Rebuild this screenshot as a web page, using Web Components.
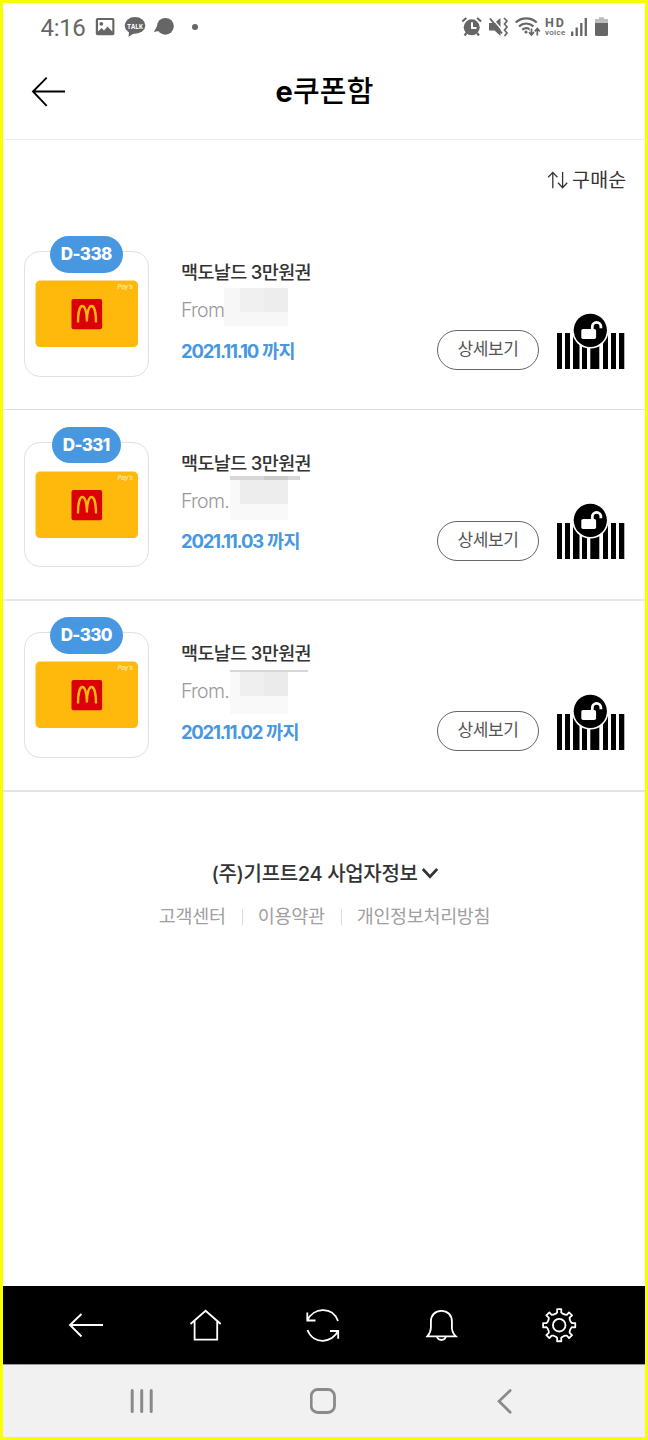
<!DOCTYPE html>
<html lang="ko">
<head>
<meta charset="utf-8">
<title>e쿠폰함</title>
<style>
html,body{margin:0;padding:0}
body{width:648px;height:1440px;background:#fff;font-family:Inter,"Noto Sans CJK KR",sans-serif;overflow:hidden}
</style>
</head>
<body>
<coupon-app></coupon-app>
<script>
// Eight-tooth gear outline around the given centre.
function gear(cx, cy) {
  const pts = [];
  for (let i = 0; i < 8; i++) {
    for (const [d, r] of [[-16, 12], [-9, 12.9], [-7.5, 16.2], [7.5, 16.2], [9, 12.9], [16, 12]]) {
      const a = (i * 45 + d) * Math.PI / 180;
      pts.push((cx + r * Math.sin(a)).toFixed(2) + ',' + (cy - r * Math.cos(a)).toFixed(2));
    }
  }
  return pts.join(' ');
}
// Each icon: viewBox and markup. One unit is one CSS pixel.
const ICONS = {
  picture: ['95 3 20 49', '<rect x="95.8" y="18" width="18.6" height="17.2" rx="1.8" fill="#666"/><path d="M98 20h14.300v11.500l-4.800-5-3.500 4-2.500-2.500L98 31.500z" fill="#fff"/><circle cx="101.300" cy="23.800" r="1.900" fill="#666"/>'],
  talk: ['124 3 22 49', '<ellipse cx="135" cy="25.400" rx="10.300" ry="8.300" fill="#666"/><path d="M129 31l-.4 5.700 6-3.700z" fill="#666"/><text x="135.100" y="28.500" text-anchor="middle" font-size="7.400" font-weight="700" fill="#fff" font-family="Open Sans,sans-serif" textLength="15.500" lengthAdjust="spacingAndGlyphs">TALK</text>'],
  ball: ['153 3 22 49', '<circle cx="165.400" cy="26.300" r="8.400" fill="#666"/><path d="M158.500 24.500c-2 1.500-2.800 4.500-4.700 7.700 1.800-1 3.500-1.200 5.500-1z" fill="#666"/>'],
  dot: ['191 3 8 49', '<circle cx="195" cy="27" r="3" fill="#666"/>'],
  alarm: ['461 3 21 49', '<circle cx="471.700" cy="27.300" r="8" fill="#666"/><path d="M462.300 21.500l4-3.500M481.100 21.500l-4-3.500M466.500 33l-2 2.500M477 33l2 2.500" stroke="#666" stroke-width="2.200" fill="none"/><path d="M472 22.300v5.700h4.500" stroke="#fff" stroke-width="2" fill="none"/>'],
  mute: ['488 3 21 49', '<path d="M489 23h5.500l6-5v18l-6-5.500H489z" fill="#666"/><path d="M491.500 17.500l11 13" stroke="#fff" stroke-width="1.400"/><path d="M490 18.500l12 15" stroke="#666" stroke-width="2"/><path d="M504 18l3 3-2.500 3 2.500 3-2.500 3 2.500 3-2.500 3" fill="none" stroke="#666" stroke-width="1.700"/>'],
  wifi: ['515 3 27 49', '<g fill="none" stroke="#666" stroke-width="2.200"><path d="M515.700 22.500c6-5.500 15-5.500 21 0"/><path d="M519 26.300c4.200-3.700 10.200-3.700 14.500 0"/><path d="M522.300 29.800c2.400-2 5.600-2 8 0"/></g><circle cx="526" cy="32" r="1.600" fill="#666"/><path d="M531.500 27.500v7.500m-2.600-3l2.600 3 2.600-3M537.300 35v-7m-2.600 3l2.600-3 2.600 3" fill="none" stroke="#fff" stroke-width="3.500"/><path d="M531.500 28.500v6.300m-2.500-2.700l2.500 2.900 2.500-2.900M537.300 35.500v-7m-2.500 2.900l2.500-2.900 2.500 2.900" fill="none" stroke="#666" stroke-width="1.700"/>'],
  signal: ['570 3 18 49', '<path d="M572.200 31.500V36M576.700 27.500V36M581.300 23V36M585.800 18V36" stroke="#666" stroke-width="2.300"/>'],
  battery: ['594 3 15 49', '<path d="M599 17.200h5V19h4v4h-13v-4h4z" fill="#bdbdbd"/><path d="M595 23h13v11.500q0 1.500-1.500 1.500h-10q-1.500 0-1.500-1.500z" fill="#666"/>'],
  back: ['30 75 38 34', '<path d="M46.700 77.700L33 91.500l13.700 14.300M33 91.500h32" fill="none" stroke="#000" stroke-width="1.900"/>'],
  sort: ['547 168 22 24', '<path d="M552.800 188.300V172.500M548.200 177.300l4.600-4.900 4.600 4.900M562.600 172v15.600M558 182.800l4.600 4.900 4.600-4.900" fill="none" stroke="#333" stroke-width="1.300"/>'],
  barcode: ['556 312 70 58', '<path d="M557 333h5v36h-5zM565 333h5v36h-5zM573 333h6.500v36H573zM582 333h5v36h-5zM590.300 333h9v36h-9zM603 333h5v36h-5zM611 333h5v36h-5zM619 333h5.300v36H619z" fill="#000"/><circle cx="590.300" cy="330.300" r="18.300" fill="#fff"/><circle cx="590.300" cy="330.300" r="16.600" fill="#000"/><rect x="581.300" y="329" width="14.800" height="10" rx="1.800" fill="#fff"/><path d="M592.300 331v-4.300a4.300 4.300 0 0 1 8.600 0v1.500" fill="none" stroke="#fff" stroke-width="2.800"/>'],
  chevron: ['421 866 19 16', '<path d="M422.800 869l7.200 7.700 7.200-7.700" fill="none" stroke="#333" stroke-width="2.700"/>'],
  navback: ['68 1306 36 38', '<path d="M81.500 1314l-11.500 11 11.500 11.500M70 1325h33" fill="none" stroke="#fff" stroke-width="1.900"/>'],
  home: ['186 1306 35 38', '<path d="M190.500 1324l15.100-13.300 15.100 13.300M194.600 1321v18.600h22.600V1321" fill="none" stroke="#fff" stroke-width="1.800"/>'],
  refresh: ['304 1306 38 38', '<g fill="none" stroke="#fff" stroke-width="1.800"><path d="M307.300 1312.500v8h8.200M307.500 1320.300C313 1308 332 1305.500 338 1321M307.500 1330C313 1345 333 1343.500 338 1330.700M330 1331h8.200v7.800"/></g>'],
  bell: ['424 1306 35 38', '<g fill="none" stroke="#fff" stroke-width="1.800"><path d="M427.300 1336.400c3-3.500 3.600-5.400 3.600-9V1321.500c0-6.500 4.300-10.600 10.500-10.600s10.500 4.100 10.500 10.600v5.900c0 3.600.6 5.500 4 9z"/><path d="M437 1337c.8 2 2.300 3 4.400 3s3.600-1 4.400-3"/></g>'],
  gear: ['541 1306 37 38', '<g fill="none" stroke="#fff" stroke-width="1.800" stroke-linejoin="round"><polygon points="' + gear(559.2, 1325.2) + '"/><circle cx="559.200" cy="1325.200" r="6.300"/></g>'],
  recents: ['129 1386 25 30', '<path d="M132.200 1390.500v21M141.700 1390.500v21M151.200 1390.500v21" stroke="#8a8a8a" stroke-width="3" stroke-linecap="round"/>'],
  syshome: ['310 1386 30 30', '<rect x="311.200" y="1389.500" width="23.300" height="23" rx="6.500" fill="none" stroke="#8a8a8a" stroke-width="2.800"/>'],
  sysback: ['495 1386 20 30', '<path d="M510.200 1390.500L499 1401.200l11.200 11" fill="none" stroke="#8a8a8a" stroke-width="2.700" stroke-linecap="round"/>'],
  card: ['35 280 104 68', '<rect x="35.500" y="280.600" width="102.500" height="66.500" rx="4.500" fill="#ffb90d"/><rect x="71.500" y="299" width="30.600" height="30.200" rx="2" fill="#db0007"/><path d="M78 322.500C78 312 80 306 82.400 306S86.900 312 86.900 321.500C86.900 312 89 306 91.500 306S96 312 96 322.500" fill="none" stroke="#ffb90d" stroke-width="2.300"/><text x="117.500" y="289.300" font-size="6" font-weight="600" font-style="italic" fill="#ffe7a8" font-family="Inter,sans-serif" textLength="15.500">Pay\u2019s</text>']
};
class UiIcon extends HTMLElement {
  connectedCallback() {
    const [vb, body] = ICONS[this.getAttribute('name')];
    const [, , w, h] = vb.split(' ');
    this.attachShadow({mode: 'open'}).innerHTML = `<style>:host{display:block;flex:none;width:${w}px;height:${h}px}svg{display:block}</style><svg width="${w}" height="${h}" viewBox="${vb}">${body}</svg>`;
  }
}
customElements.define('ui-icon', UiIcon);

// A single line of text, tracked so that it fills the width given in "w".
class FitText extends HTMLElement {
  connectedCallback() {
    const root = this.attachShadow({mode: 'open'});
    root.innerHTML = '<style>:host{display:block;white-space:pre;flex:none}span{display:inline-block}</style><span><slot></slot></span>';
    const span = root.querySelector('span');
    const w = +this.getAttribute('w');
    const n = this.textContent.length;
    span.style.letterSpacing = (w - span.getBoundingClientRect().width) / n + 'px';
    this.style.width = w + 'px';
  }
}
customElements.define('fit-text', FitText);

class StatusBar extends HTMLElement {
  connectedCallback() {
    this.attachShadow({mode: 'open'}).innerHTML = `
<style>:host{display:flex;height:49px;padding:0 36px 0 37.500px;box-sizing:border-box}
.time{font:400 24px/50px Roboto,sans-serif;color:#666;margin-right:9.500px}
.right{display:flex;margin-left:auto}
.hd{width:23px;margin-left:2px;padding:14px 0 0 1px;box-sizing:border-box;color:#666}
.hd fit-text:first-child{font:700 12.500px/11px Roboto,sans-serif}
.hd fit-text:last-child{font:500 8px/9px Roboto,sans-serif}</style>
<fit-text class="time" w="45">4:16</fit-text>
<ui-icon name="picture"></ui-icon><ui-icon name="talk" style="margin-left:9px"></ui-icon><ui-icon name="ball" style="margin-left:7px"></ui-icon><ui-icon name="dot" style="margin-left:16px"></ui-icon>
<div class="right"><ui-icon name="alarm"></ui-icon><ui-icon name="mute" style="margin-left:6px"></ui-icon><ui-icon name="wifi" style="margin-left:6px"></ui-icon><div class="hd"><fit-text w="21">HD</fit-text><fit-text w="20.500">voice</fit-text></div><ui-icon name="signal" style="margin-left:3px"></ui-icon><ui-icon name="battery" style="margin-left:6px"></ui-icon></div>`;
  }
}
customElements.define('status-bar', StatusBar);

class PageHeader extends HTMLElement {
  connectedCallback() {
    this.attachShadow({mode: 'open'}).innerHTML = `
<style>:host{display:grid;grid-template-columns:1fr auto 1fr;height:88px;box-sizing:border-box;border-bottom:1px solid #ebebeb;padding:0 26px 0 27px}
ui-icon{margin-top:23px}fit-text{font-size:29px;font-weight:500;line-height:80px;color:#000}b{font-weight:700}</style>
<ui-icon name="back"></ui-icon><fit-text w="98"><b>e</b>쿠폰함</fit-text><i></i>`;
  }
}
customElements.define('page-header', PageHeader);

class CouponRow extends HTMLElement {
  connectedCallback() {
    const a = n => this.getAttribute(n);
    this.attachShadow({mode: 'open'}).innerHTML = `
<style>
:host{display:block;height:191px;box-sizing:border-box;border-bottom:var(--line,1px solid #dedede)}
.row{display:flex;padding:var(--top,17px) 19px 0 20.500px}
.thumb{position:relative;width:125.500px;height:125.500px;box-sizing:border-box;margin-top:15px;border:1px solid #e1e1e1;border-radius:16px;flex:none;padding:28px 0 0 10.500px}
.badge{position:absolute;top:-16px;left:0;right:0;display:flex;justify-content:center}
.badge div{background:#4897e1;border-radius:19px;height:36.500px;padding:0 11px;color:#fff;font-weight:800;font-size:17px;line-height:36.500px}
.info{margin-left:32px;flex:1;min-width:0;padding-top:21px}
.name{font-size:18.500px;font-weight:500;line-height:30px;color:#333}
.from{position:relative;font-size:19.500px;font-weight:300;line-height:32px;color:#999;margin-top:7px}
.date{font-size:18.500px;font-weight:700;line-height:30px;color:#4897e1;margin-top:9.500px;display:flex}
.date fit-text+fit-text{margin-left:4px}
.btn{margin-top:94px;width:102px;height:40px;box-sizing:border-box;border:1px solid #666;border-radius:20px;display:flex;justify-content:center;color:#555;font-size:17px;line-height:37px;flex:none}
.code{margin:var(--code,76px) 0 0 17px}
</style>
<div class="row">
<div class="thumb"><ui-icon name="card"></ui-icon><div class="badge"><div><fit-text w="${a('bw')}">${a('code')}</fit-text></div></div></div>
<div class="info"><fit-text class="name" w="130">맥도날드 3만원권</fit-text>
<div class="from"><fit-text w="48">From.</fit-text><slot></slot></div>
<div class="date"><fit-text w="${a('dw')}">${a('date')}</fit-text><fit-text w="33">까지</fit-text></div></div>
<div class="btn"><fit-text w="61">상세보기</fit-text></div>
<ui-icon class="code" name="barcode"></ui-icon>
</div>`;
  }
}
customElements.define('coupon-row', CouponRow);

// Pixelated cover over the sender's name; "tiles" lists x y w h colour.
class MosaicCover extends HTMLElement {
  connectedCallback() {
    const t = this.getAttribute('tiles').split(';').map(s => {
      const [x, y, w, h, c] = s.trim().split(' ');
      return `<rect x="${x}" y="${y}" width="${w}" height="${h}" fill="${c}"/>`;
    }).join('');
    this.attachShadow({mode: 'open'}).innerHTML = `<style>:host{display:block;position:absolute;left:42.500px;top:-6px}svg{display:block;overflow:visible}</style><svg width="90" height="48" shape-rendering="crispEdges">${t}</svg>`;
  }
}
customElements.define('mosaic-cover', MosaicCover);

class PageFooter extends HTMLElement {
  connectedCallback() {
    this.attachShadow({mode: 'open'}).innerHTML = `
<style>:host{display:block;padding-top:65px;flex:1}
.biz{display:flex;justify-content:center;align-items:center;gap:3px;font-size:20px;font-weight:500;line-height:34px;color:#333;padding-left:3px}
.links{display:flex;justify-content:center;align-items:center;margin-top:8px;font-size:18.500px;font-weight:400;line-height:34px;color:#a0a0a0;padding-left:1px}
i{width:1px;height:16px;background:#ddd;margin:2px 15px 0 16px}</style>
<div class="biz"><fit-text w="206">(주)기프트24 사업자정보</fit-text><ui-icon name="chevron"></ui-icon></div>
<div class="links"><fit-text w="67">고객센터</fit-text><i></i><fit-text w="67">이용약관</fit-text><i></i><fit-text w="133.500">개인정보처리방침</fit-text></div>`;
  }
}
customElements.define('page-footer', PageFooter);

class AppNav extends HTMLElement {
  connectedCallback() {
    this.attachShadow({mode: 'open'}).innerHTML = `
<style>:host{display:flex;height:78px;background:#000;padding:20px 67px 0 65px;box-sizing:border-box;justify-content:space-between}</style>
<ui-icon name="navback"></ui-icon><ui-icon name="home"></ui-icon><ui-icon name="refresh"></ui-icon><ui-icon name="bell"></ui-icon><ui-icon name="gear"></ui-icon>`;
  }
}
customElements.define('app-nav', AppNav);

class SystemNav extends HTMLElement {
  connectedCallback() {
    this.attachShadow({mode: 'open'}).innerHTML = `
<style>:host{display:flex;height:73px;background:#f1f1f1;border-top:1px solid #999;padding:21px 130px 0 126px;box-sizing:border-box;justify-content:space-between}</style>
<ui-icon name="recents"></ui-icon><ui-icon name="syshome"></ui-icon><ui-icon name="sysback"></ui-icon>`;
  }
}
customElements.define('system-nav', SystemNav);

class CouponApp extends HTMLElement {
  connectedCallback() {
    this.attachShadow({mode: 'open'}).innerHTML = `
<style>:host{display:flex;flex-direction:column;width:648px;height:1440px;box-sizing:border-box;border:3px solid #f7ff00;background:#fff}
.sort{display:flex;justify-content:flex-end;align-items:center;gap:3px;height:79px;box-sizing:border-box;padding:0 18.500px 0 0;color:#333;font-size:19.500px;font-weight:400}
.sort fit-text{line-height:30px}</style>
<status-bar></status-bar>
<page-header></page-header>
<div class="sort"><ui-icon name="sort"></ui-icon><fit-text w="54.500">구매순</fit-text></div>
<coupon-row code="D-338" bw="51" date="2021.11.10" dw="77"><mosaic-cover tiles="0 0 64 38 #f7f7f7;16 0 24 24 #f0f0f0;40 0 24 24 #ededed"></mosaic-cover></coupon-row>
<coupon-row code="D-331" bw="47" date="2021.11.03" dw="82" style="--top:16.500px;--code:75px;--line:2px solid #e7e7e7"><mosaic-cover tiles="6 -3 58 44 #f9f9f9;16 1 48 24 #ededed;6 -3 70 4 #d6d6d6;40 -3 24 4 #cacaca"></mosaic-cover></coupon-row>
<coupon-row code="D-330" bw="51" date="2021.11.02" dw="81" style="--top:16.300px;--line:2px solid #e3e3e3"><mosaic-cover tiles="6 2 58 43 #f9f9f9;16 3 24 24 #efefef;40 3 24 24 #ebebeb;6 1 78 2 #d6d6d6"></mosaic-cover></coupon-row>
<page-footer></page-footer>
<app-nav></app-nav>
<system-nav></system-nav>`;
  }
}
customElements.define('coupon-app', CouponApp);
</script>
</body>
</html>
